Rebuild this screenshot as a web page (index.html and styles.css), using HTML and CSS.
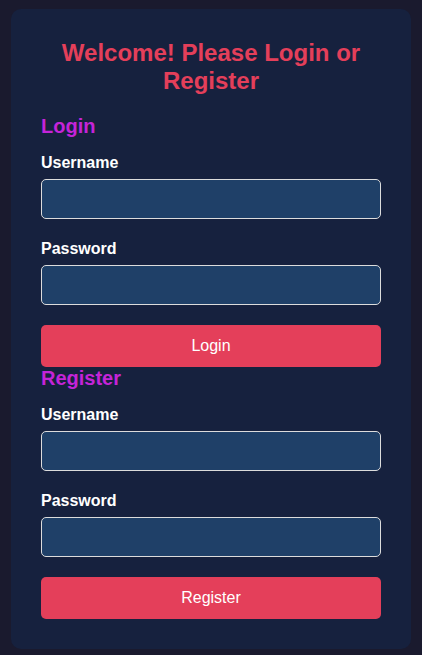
FILE: index.html
```html
<!DOCTYPE html>
<html lang="en">
<head>
<meta charset="utf-8">
<title>Login or Register</title>
<link rel="stylesheet" href="styles.css">
</head>
<body>
<div class="card">
  <h2 class="title">Welcome! Please Login or Register</h2>
  <form class="form">
    <h3 class="form-heading">Login</h3>
    <label class="label" for="lu">Username</label>
    <input class="input" id="lu" type="text">
    <label class="label" for="lp">Password</label>
    <input class="input" id="lp" type="password">
    <button class="btn" type="button">Login</button>
  </form>
  <form class="form">
    <h3 class="form-heading">Register</h3>
    <label class="label" for="ru">Username</label>
    <input class="input" id="ru" type="text">
    <label class="label" for="rp">Password</label>
    <input class="input" id="rp" type="password">
    <button class="btn" type="button">Register</button>
  </form>
</div>
</body>
</html>
```
FILE: styles.css
```css
* { box-sizing: border-box; }
html, body {
  margin: 0;
  background: #1a1a2e;
}
body {
  padding-top: 9px;
  font-family: "Liberation Sans", Arial, sans-serif;
  color: #ffffff;
}
.card {
  width: 400px;
  margin: 0 auto;
  background: #16213e;
  border-radius: 10px;
  padding: 30px;
}
.title {
  margin: 0 0 20px;
  font-size: 24px;
  font-weight: bold;
  color: #e43f5a;
  text-align: center;
}
.form {
  display: flex;
  flex-direction: column;
  margin: 0;
}
.form-heading {
  margin: 0 0 16px;
  font-size: 20px;
  font-weight: bold;
  color: #c424d8;
}
.label {
  display: block;
  font-size: 16px;
  font-weight: bold;
  margin-bottom: 7px;
}
.input {
  display: block;
  width: 100%;
  height: 40px;
  margin: 0 0 20.5px;
  padding: 10px;
  background: #1f4068;
  border: 1px solid #dcdcdc;
  border-radius: 5px;
  color: #fff;
  font-family: "Liberation Sans", Arial, sans-serif;
  font-size: 16px;
}
.btn {
  display: block;
  width: 100%;
  height: 42px;
  padding: 0;
  background: #e43f5a;
  border: none;
  border-radius: 5px;
  color: #ffffff;
  font-family: "Liberation Sans", Arial, sans-serif;
  font-size: 16px;
  cursor: pointer;
}
```
